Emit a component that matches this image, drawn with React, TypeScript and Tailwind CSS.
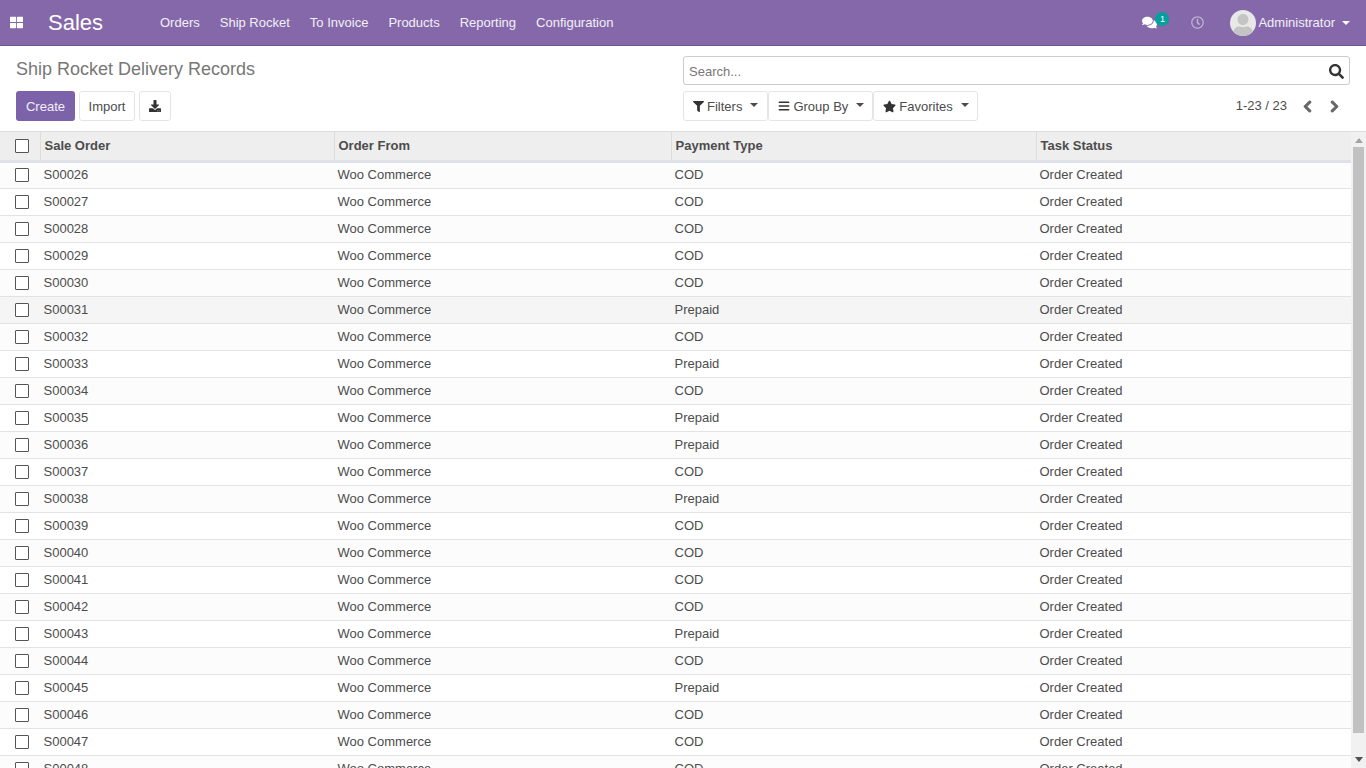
import { FaBars, FaChevronLeft, FaChevronRight, FaComments, FaDownload, FaFilter, FaRegClock, FaSearch, FaStar, FaThLarge, FaUser } from "react-icons/fa";

const menus = ["Orders", "Ship Rocket", "To Invoice", "Products", "Reporting", "Configuration"];

const prepaid = [31, 33, 35, 36, 38, 43, 45];
const rows = Array.from({ length: 23 }, (_, i) => 26 + i).map((n) => ({
  id: n,
  name: `S000${n}`,
  payment: prepaid.includes(n) ? "Prepaid" : "COD",
}));

function Check() {
  return <span className="block w-[14px] h-[14px] ml-[15px] border-[1.5px] border-[#555] rounded-[1px] bg-white" />;
}

function Caret() {
  return <span className="inline-block ml-[5px] mb-[3px] border-x-[4px] border-t-[4px] border-x-transparent border-t-current" />;
}

function FilterButton({ icon, label }: { icon: React.ReactNode; label: string }) {
  return (
    <button className="h-[30px] pl-[9px] pr-[9px] not-first:pr-[8px] flex items-center gap-[3px] bg-white border border-[#e5e5e5] rounded-[3px] text-[#4c4c4c] text-[13px]">
      {icon}
      <span className="mt-[2px]">{label}</span>
      <Caret />
    </button>
  );
}

export default function App() {
  return (
    <div className="h-screen flex flex-col overflow-hidden bg-white text-[13px] text-[#4c4c4c] font-['Liberation_Sans',Arial,sans-serif]">
      <nav className="h-[46px] shrink-0 flex items-center bg-[#8468a9] border-b border-[#6b5590] text-white">
        <FaThLarge className="ml-[10px] w-[13px] h-[13px]" />
        <span className="ml-[25px] w-[112px] text-[22px] leading-none">Sales</span>
        <div className="flex gap-5 text-white/90">
          {menus.map((m) => (
            <span key={m}>{m}</span>
          ))}
        </div>
        <div className="ml-auto flex items-center">
          <span className="relative mr-[34px]">
            <FaComments className="w-[15px] h-[15px]" />
            <span className="absolute left-[13px] top-[-3px] w-[14px] h-[14px] rounded-full bg-[#00a09d] text-[9px] leading-[14px] text-center">1</span>
          </span>
          <FaRegClock className="w-[13px] h-[13px] text-white/50 mr-[26px]" />
          <span className="w-[26px] h-[26px] rounded-full bg-[#e8e8e8] overflow-hidden flex items-end justify-center">
            <FaUser className="w-[20px] h-[22px] text-[#c4c4c4]" />
          </span>
          <span className="ml-[2px] text-white/90">Administrator</span>
          <span className="ml-[7px] mr-[16px] border-x-[4px] border-t-[4px] border-x-transparent border-t-white" />
        </div>
      </nav>

      <div className="h-[86px] shrink-0 flex px-4 border-b border-[#ddd]">
        <div className="w-[667px] shrink-0">
          <h1 className="mt-[12px] text-[18px] leading-[22px] text-[#777]">Ship Rocket Delivery Records</h1>
          <div className="mt-[11px] flex gap-1">
            <button className="h-[30px] w-[59px] pt-[1px] bg-[#7c62a8] rounded-[3px] text-white/90">Create</button>
            <button className="h-[30px] w-[56px] pt-[1px] bg-white border border-[#e5e5e5] rounded-[3px]">Import</button>
            <button className="h-[30px] w-[32px] flex items-center justify-center bg-white border border-[#e5e5e5] rounded-[3px] text-[#333]">
              <FaDownload className="w-[12px] h-[12px]" />
            </button>
          </div>
        </div>
        <div className="flex-1">
          <div className="mt-[10px] h-[29px] flex items-center pl-[5px] pr-[5px] pt-[2px] border border-[#ccc] rounded-[3px]">
            <span className="text-[#777]">Search...</span>
            <FaSearch className="ml-auto w-[15px] h-[15px] text-[#333]" />
          </div>
          <div className="mt-[6px] flex items-center">
            <div className="flex">
              <FilterButton icon={<FaFilter className="w-[11px] h-[11px] text-[#333]" />} label="Filters" />
              <FilterButton icon={<FaBars className="w-[12px] h-[12px] text-[#333]" />} label="Group By" />
              <FilterButton icon={<FaStar className="w-[13px] h-[13px] text-[#333]" />} label="Favorites" />
            </div>
            <span className="ml-auto">1-23 / 23</span>
            <FaChevronLeft strokeWidth={40} className="ml-[15px] w-[11px] h-[13px] text-[#666]" />
            <FaChevronRight strokeWidth={40} className="ml-[16px] mr-[10px] w-[11px] h-[13px] text-[#666]" />
          </div>
        </div>
      </div>

      <div className="flex-1 min-h-0 flex">
        <div className="flex-1 min-w-0 overflow-hidden">
          <table className="w-full table-fixed border-collapse">
            <colgroup>
              <col className="w-[40px]" />
              <col className="w-[294px]" />
              <col className="w-[337px]" />
              <col className="w-[365px]" />
              <col />
            </colgroup>
            <thead>
              <tr className="h-[29px] bg-[#eee] border-b-[3px] border-[#dee2e6] text-left">
                <th className="p-0 font-normal"><Check /></th>
                <th className="px-1 py-0 border-l border-[#ddd]">Sale Order</th>
                <th className="px-1 py-0 border-l border-[#ddd]">Order From</th>
                <th className="px-1 py-0 border-l border-[#ddd]">Payment Type</th>
                <th className="px-1 py-0 border-l border-[#ddd]">Task Status</th>
              </tr>
            </thead>
            <tbody>
              {rows.map((r, i) => (
                <tr key={r.id} className={`h-[27px] border-b border-[#e3e3e3] ${r.id === 31 ? "bg-[#f5f5f5]" : i % 2 === 0 ? "bg-[#fcfcfc]" : "bg-white"}`}>
                  <td className="p-0"><Check /></td>
                  <td className="px-[3.5px] py-0">{r.name}</td>
                  <td className="px-[3.5px] py-0">Woo Commerce</td>
                  <td className="px-[3.5px] py-0">{r.payment}</td>
                  <td className="px-[3.5px] py-0">Order Created</td>
                </tr>
              ))}
            </tbody>
          </table>
        </div>
        <div className="w-[15px] shrink-0 flex flex-col items-center bg-[#f1f1f1]">
          <span className="mt-[6px] border-x-[4px] border-b-[5px] border-x-transparent border-b-[#a3a3a3]" />
          <span className="mt-[4px] h-[586px] w-[11px] bg-[#c1c1c1]" />
          <span className="mt-auto mb-[6px] border-x-[4px] border-t-[5px] border-x-transparent border-t-[#505050]" />
        </div>
      </div>
    </div>
  );
}
